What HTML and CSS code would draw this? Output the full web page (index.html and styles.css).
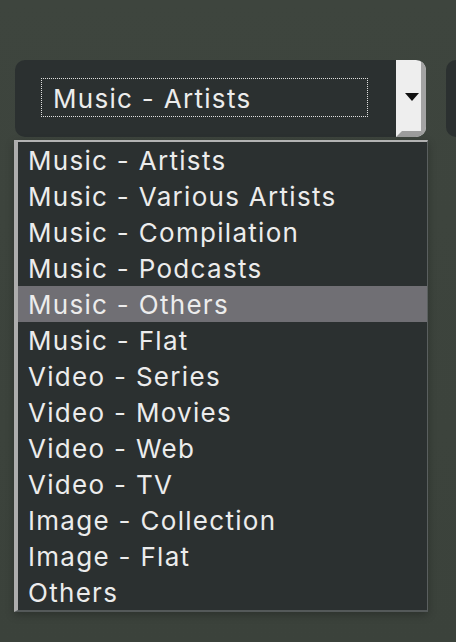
FILE: index.html
```html
<!DOCTYPE html>
<html>
<head>
<meta charset="utf-8">
<link rel="stylesheet" href="styles.css">
</head>
<body>
<div class="bar">
  <div class="select">
    <div class="field"><div class="focus">Music - Artists</div></div>
    <div class="btn">
      <svg class="arrow" width="16" height="10" viewBox="0 0 16 10"><path d="M1 1 L15 1 L8 9 Z" fill="#111"/></svg>
    </div>
  </div>
  <div class="select other"></div>
</div>
<ul class="list">
  <li>Music - Artists</li>
  <li>Music - Various Artists</li>
  <li>Music - Compilation</li>
  <li>Music - Podcasts</li>
  <li class="active">Music - Others</li>
  <li>Music - Flat</li>
  <li>Video - Series</li>
  <li>Video - Movies</li>
  <li>Video - Web</li>
  <li>Video - TV</li>
  <li>Image - Collection</li>
  <li>Image - Flat</li>
  <li>Others</li>
</ul>
</body>
</html>
```
FILE: styles.css
```css
html, body {
  margin: 0;
  height: 642px;
  overflow: hidden;
}
body {
  background: linear-gradient(180deg, #3e453e 0%, #3b423b 100%);
  font-family: Inter, "Noto Sans", sans-serif;
  color: #ececec;
  position: relative;
}
.bar {
  display: flex;
  gap: 20px;
  padding: 60px 0 0 15px;
  overflow: hidden;
}
.select {
  flex: 0 0 411px;
  height: 77px;
  background: #2b3030;
  border-radius: 10px;
  display: flex;
  overflow: hidden;
}
.select.other {
  flex: 0 0 60px;
}
.field {
  flex: 1;
  padding: 18px 0 0 26px;
}
.focus {
  height: 37px;
  border: 1px dotted #e0e0e0;
  padding-left: 11px;
  font-size: 26px;
  line-height: 40px;
  letter-spacing: 1.3px;
  width: 314px;
}
.btn {
  flex: 0 0 19px;
  background: #eeeeee;
  border-left: 6px solid #eeeeee;
  border-right: 5px solid #a3a3a3;
  border-bottom: 6px solid #9c9c9c;
  display: flex;
  align-items: center;
  justify-content: center;
}
.arrow {
  display: block;
  margin-top: 2px;
  filter: blur(0.5px);
}
.list {
  position: absolute;
  left: 14px;
  top: 140px;
  width: 409px;
  margin: 0;
  padding: 0;
  list-style: none;
  background: #2b3030;
  border-top: 2px solid #b3b3b3;
  border-left: 4px solid #adadad;
  border-right: 1px solid #5a5f5f;
  border-bottom: 2px solid #545959;
  box-shadow: 0 3px 8px rgba(0,0,0,0.25);
}
.list li {
  height: 36px;
  line-height: 38px;
  padding-left: 10px;
  font-size: 26px;
  letter-spacing: 1.3px;
  white-space: nowrap;
}
.list li.active {
  background: #706f74;
}
```
